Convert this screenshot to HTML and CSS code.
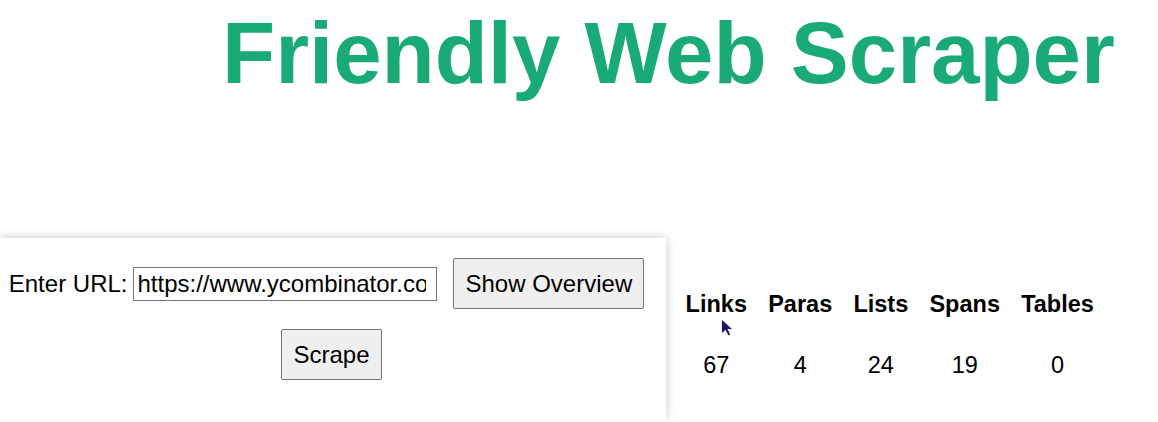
FILE: index.html
```html
<!DOCTYPE html>
<html lang="en">
<head>
<meta charset="utf-8">
<title>Friendly Web Scraper</title>
<link rel="stylesheet" href="styles.css">
</head>
<body>
<h1 class="title">Friendly Web Scraper</h1>
<main class="content">
  <section class="panel">
    <div class="row">
      <label class="label" for="url">Enter URL:</label>
      <input class="url" id="url" type="text" value="https://www.ycombinator.com/">
      <button class="btn">Show Overview</button>
    </div>
    <div class="row">
      <button class="btn">Scrape</button>
    </div>
  </section>
  <table class="stats">
    <tr><th>Links</th><th>Paras</th><th>Lists</th><th>Spans</th><th>Tables</th></tr>
    <tr><td>67</td><td>4</td><td>24</td><td>19</td><td>0</td></tr>
  </table>
</main>
<svg class="cursor" width="14" height="18" viewBox="0 0 14 18"><path d="M1 1 L1 14 L4.5 10.8 L7.5 16.5 L9.2 15.6 L6.4 10 L11 10 Z" fill="#1c0f6e"/></svg>
</body>
</html>
```
FILE: styles.css
```css
html, body {
  margin: 0;
  padding: 0;
  background: #ffffff;
  font-family: "Liberation Sans", Arial, sans-serif;
  color: #000;
}
.title {
  margin: 0;
  padding: 2px 0 0 222px;
  font-size: 87px;
  line-height: 101px;
  font-weight: bold;
  color: #1aaa75;
  white-space: nowrap;
}
.content {
  display: flex;
  align-items: center;
  gap: 8px;
  margin-top: 135px;
}
.panel {
  width: 666px;
  height: 182px;
  box-sizing: border-box;
  padding: 10px 3px 30px 0;
  background: #fff;
  box-shadow: 0 0 10px rgba(0, 0, 0, 0.22);
  flex: none;
}
.row {
  display: flex;
  justify-content: center;
  align-items: center;
  height: 71px;
}
.label {
  font-size: 24px;
  margin-right: 6px;
}
.url {
  width: 304px;
  height: 34px;
  box-sizing: border-box;
  border: 1px solid #767676;
  padding: 1px 10px 1px 3px;
  font-family: "Liberation Sans", Arial, sans-serif;
  font-size: 24px;
  color: #000;
  margin: 0 6px 0 0;
}
.btn {
  font-family: "Liberation Sans", Arial, sans-serif;
  font-size: 24px;
  line-height: 29px;
  padding: 10px 11px;
  margin: 10px;
  background: #efefef;
  border: 1px solid #767676;
  border-radius: 2px;
  color: #000;
}
.stats {
  border-spacing: 2px;
  font-size: 23.5px;
  margin-top: 12px;
}
.stats th, .stats td {
  padding: 16px 9.6px;
  text-align: center;
}
.cursor {
  position: absolute;
  left: 721px;
  top: 319px;
}
```
